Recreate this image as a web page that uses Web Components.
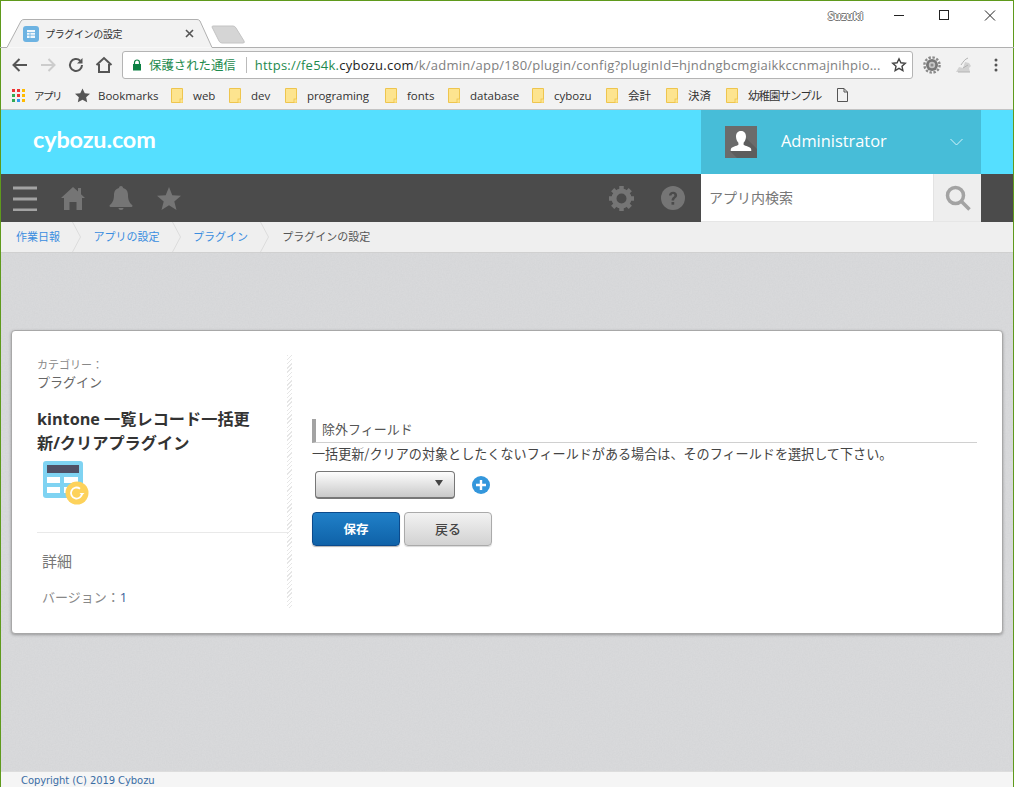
<!DOCTYPE html>
<html lang="ja">
<head>
<meta charset="utf-8">
<title>プラグインの設定</title>
<style>
  html, body { margin: 0; height: 100%; overflow: hidden; }
  body { font-family: "Open Sans", "Noto Sans CJK JP", sans-serif; }
  browser-window { height: 787px; }
</style>
</head>
<body>
<browser-window>
  <browser-tabs slot="chrome" title-text="プラグインの設定"></browser-tabs>
  <browser-toolbar slot="chrome"></browser-toolbar>
  <browser-bookmarks slot="chrome"></browser-bookmarks>
  <cy-header user="Administrator"></cy-header>
  <cy-nav placeholder="アプリ内検索"></cy-nav>
  <cy-breadcrumb>
    <a>作業日報</a>
    <a>アプリの設定</a>
    <a>プラグイン</a>
    <span>プラグインの設定</span>
  </cy-breadcrumb>
  <plugin-page>
    <plugin-side category="プラグイン" name="kintone 一覧レコード一括更新/クリアプラグイン" version="1"></plugin-side>
    <plugin-config
      label="除外フィールド"
      help="一括更新/クリアの対象としたくないフィールドがある場合は、そのフィールドを選択して下さい。"></plugin-config>
  </plugin-page>
  <cy-footer>Copyright (C) 2019 Cybozu</cy-footer>
</browser-window>

<script>
// helper: every element just stamps its html in an open shadow root
class Base extends HTMLElement {
  constructor() {
    super();
    this.attachShadow({ mode: 'open' });
  }
  connectedCallback() {
    this.shadowRoot.innerHTML = this.render();
  }
}

class BrowserWindow extends Base {
  render() {
    return `<style>
      :host { display: flex; flex-direction: column; box-sizing: border-box; width: 1014px;
        border: 1px solid #5f9a1c; border-bottom: 0; background: #fff; }
      .chrome { display: flex; flex-direction: column; }
      </style>
      <div class="chrome"><slot name="chrome"></slot></div>
      <slot></slot>`;
  }
}

class BrowserTabs extends Base {
  render() {
    return `<style>
      :host { display: block; position: relative; height: 47px; background: #fff; font-family: "Noto Sans CJK JP", sans-serif; }
      svg.strip { position: absolute; left: -1px; top: -1px; }
      .title { position: absolute; left: 44px; top: 25px; font-size: 10px; line-height: 16px; letter-spacing: -.35px; color: #333; white-space: nowrap; }
      .user { position: absolute; left: 827px; top: 8px; font: 700 11px/14px "Open Sans", sans-serif; color: #fff;
        text-shadow: -1px 0 #777, 1px 0 #777, 0 -1px #777, 0 1px #777; letter-spacing: -.2px; }
      </style>
      <svg class="strip" width="1014" height="48" viewBox="0 0 1014 48">
        <path d="M0 47.5H7L21 21q1-1.500 3-1.500H197q2 0 3 1.500L212 47.500H1014" fill="#f2f2f2" stroke="#b0b0b0"/>
        <path d="M212 27q0-1 1-1h20q2 0 3 2l8 13q1 2-1 2H222q-2 0-3-2z" fill="#d5d5d5" stroke="#c4c4c4"/>
        <rect x="23" y="26" width="16" height="16" rx="3" fill="#6db3e2"/>
        <path d="M27 30h8v8h-8z" fill="#fff" opacity=".9"/>
        <path d="M27 32.500h8M27 35.200h8M30 33v5" stroke="#6db3e2" stroke-width=".8"/>
        <path d="M186 30l7 7M193 30l-7 7" stroke="#555" stroke-width="1.600"/>
        <path d="M894 15.500h10" stroke="#222"/>
        <rect x="939.500" y="10.500" width="9" height="9" fill="none" stroke="#222"/>
        <path d="M985 10.500l10 10M995 10.500l-10 10" stroke="#222"/>
      </svg>
      <span class="title">${this.getAttribute('title-text')}</span>
      <span class="user">Suzuki</span>`;
  }
}

class BrowserToolbar extends Base {
  render() {
    return `<style>
      :host { display: flex; align-items: center; height: 35px; box-sizing: border-box; background: #f2f2f2; padding: 0 0 1px 9px; }
      svg { flex: none; display: block; }
      .nav { display: flex; gap: 8px; width: 112px; flex: none; }
      .omni { flex: none; width: 791px; height: 28px; box-sizing: border-box; background: #fff; border: 1px solid #b4b4b4; border-radius: 3px;
        display: flex; align-items: center; font-size: 13px; white-space: nowrap; padding-left: 9px; position: relative; }
      .secure { color: #1d8a4d; font-family: "Noto Sans CJK JP", sans-serif; font-size: 12.400px; margin-left: 7px; }
      .sep { width: 1px; height: 16px; background: #bbb; margin: 0 8px 0 10px; }
      .url { color: #808080; font-family: "Open Sans", sans-serif; letter-spacing: .24px; }
      .url b { font-weight: 400; color: #1d8a4d; }
      .url i { font-style: normal; color: #222; }
      .star { position: absolute; right: 5px; top: 5px; }
      .ext { display: flex; align-items: center; gap: 14px; margin-left: 10px; }
      </style>
      <div class="nav">
        <svg width="20" height="20" viewBox="0 0 20 20"><path d="M17 10H4M9.500 4L3.500 10l6 6" fill="none" stroke="#555" stroke-width="2"/></svg>
        <svg width="20" height="20" viewBox="0 0 20 20"><path d="M3 10h13M10.500 4l6 6-6 6" fill="none" stroke="#ccc" stroke-width="2"/></svg>
        <svg width="20" height="20" viewBox="0 0 20 20"><path d="M16 10a6 6 0 1 1-1.800-4.300" fill="none" stroke="#555" stroke-width="2"/><path d="M16.500 3v5.500H11z" fill="#555"/></svg>
        <svg width="20" height="20" viewBox="0 0 20 20"><path d="M2.500 10L10 3l7.500 7M5 9v8h10V9" fill="none" stroke="#555" stroke-width="2"/></svg>
      </div>
      <div class="omni">
        <svg width="10" height="12" viewBox="0 0 10 12"><path d="M2.500 5V3.500a2.500 2.500 0 0 1 5 0V5" fill="none" stroke="#0b8043" stroke-width="1.200"/><rect x="1" y="5" width="8" height="6.500" fill="#0b8043"/></svg>
        <span class="secure">保護された通信</span><span class="sep"></span>
        <span class="url"><b>https://</b><b>fe54k.</b><i>cybozu.com</i>/k/admin/app/180/plugin/config?pluginId=hjndngbcmgiaikkccnmajnihpio...</span>
        <svg class="star" width="16" height="16" viewBox="0 0 16 16"><path d="M8 1.800l1.900 4 4.400.5-3.300 3 .9 4.300L8 11.400l-3.900 2.200.9-4.300-3.300-3 4.400-.5z" fill="none" stroke="#444" stroke-width="1.400"/></svg>
      </div>
      <div class="ext">
        <svg width="18" height="18" viewBox="0 0 18 18"><circle cx="9" cy="9" r="7.600" fill="none" stroke="#8a8a8a" stroke-width="2.400" stroke-dasharray="2.400 1.600"/><circle cx="9" cy="9" r="6" fill="#777"/><circle cx="9" cy="9" r="3.200" fill="#c4c4c4"/><circle cx="9" cy="9" r="1.500" fill="#8a8a8a"/></svg>
        <svg width="18" height="18" viewBox="0 0 18 18"><path d="M1 16l3-5 4 1 2-6 4 1 2 3-2 2 1 4H5z" fill="#d2d2d2"/><path d="M6 9c2-3 4-6 7-7M3 16h12M8 12l5-3" fill="none" stroke="#b4b4b4"/></svg>
        <svg width="4" height="14" viewBox="0 0 4 14" style="margin-left:7px"><circle cx="2" cy="2" r="1.500" fill="#555"/><circle cx="2" cy="7" r="1.500" fill="#555"/><circle cx="2" cy="12" r="1.500" fill="#555"/></svg>
      </div>`;
  }
}

class BrowserBookmarks extends Base {
  render() {
    const folder = `<svg width="12" height="15" viewBox="0 0 12 15"><path d="M.5.500h11v14H.500z" fill="#fde48f" stroke="#eec54e"/><rect x="9" y="11" width="3" height="4" fill="#fde48f" stroke="#eec54e" stroke-width=".8"/></svg>`;
    // name, slot width, letter spacing
    const items = [
      ['web', 58, 0], ['dev', 56, 0], ['programing', 100, -.1], ['fonts', 63, 0],
      ['database', 84, 0], ['cybozu', 74, 0], ['会計', 60, 0], ['決済', 60, 0], ['幼稚園サンプル', 111, -1]
    ];
    const list = items.map(i =>
      `<span class="bm" style="width:${i[1]}px">${folder}<span class="t" style="letter-spacing:${i[2]}px">${i[0]}</span></span>`
    ).join('');
    return `<style>
      :host { display: flex; align-items: center; height: 27px; box-sizing: border-box; background: #f2f2f2; border-bottom: 1px solid #c4c4c4;
        padding: 0 0 2px 11px; font: 11.500px "Open Sans", "Noto Sans CJK JP", sans-serif; color: #333; white-space: nowrap; }
      svg { display: block; flex: none; }
      .apps { display: grid; grid-template-columns: repeat(3, 3px); gap: 2px; margin-right: 9px; }
      .apps i { width: 3px; height: 3px; }
      .first { width: 41px; flex: none; font-size: 10.500px; letter-spacing: -1.500px; }
      .mark { display: flex; gap: 8px; align-items: center; width: 96px; flex: none; }
      .bm { display: flex; align-items: center; gap: 10px; flex: none; }
      </style>
      <span class="apps">
        <i style="background:#e33"></i><i style="background:#e33"></i><i style="background:#fb0"></i>
        <i style="background:#3a5"></i><i style="background:#e33"></i><i style="background:#fb0"></i>
        <i style="background:#3a5"></i><i style="background:#39e"></i><i style="background:#fb0"></i>
      </span>
      <span class="first">アプリ</span>
      <span class="mark"><svg width="15" height="15" viewBox="0 0 16 15"><path d="M8 0l2.400 5 5.600.6-4.100 3.700 1.100 5.500L8 12l-5 2.800 1.100-5.500L0 5.600 5.600 5z" fill="#555"/></svg><span>Bookmarks</span></span>
      ${list}
      <svg width="11" height="14" viewBox="0 0 11 14"><path d="M.5.500h6.500l3.500 3.500v9.500H.500zM7 .500V4h3.500" fill="none" stroke="#555"/></svg>`;
  }
}

class CyHeader extends Base {
  render() {
    return `<style>
      :host { display: flex; height: 64px; background: #55dfff; align-items: center; }
      .logo { margin-left: 32px; font: 700 23.400px/1 "Lato", sans-serif; color: #fff; flex: 1; margin-top: -4px; letter-spacing: -.1px; }
      .user { width: 280px; height: 64px; margin-right: 32px; background: #47bdd8; display: flex; align-items: center; box-sizing: border-box; padding-left: 24px; }
      .user svg.ava { display: block; flex: none; }
      .name { color: #fff; font: 400 16.400px "Open Sans", sans-serif; margin: -4px 0 0 24px; flex: 1; }
      .caret { margin-right: 18px; }
      </style>
      <span class="logo">cybozu.com</span>
      <div class="user">
        <svg class="ava" width="32" height="32" viewBox="0 0 32 32">
          <rect width="32" height="32" fill="#6b6b6b"/>
          <path d="M21 12l11 11v9H12l-7-7z" fill="#5d5d5d"/>
          <path d="M16 5c3.500 0 5 2.700 5 5.500 0 2.500-1 5-2.400 6.200v1.800c0 1 5.400 2 7 3.500.7.700.7 2.500.7 3H5.700c0-.5 0-2.300.7-3 1.600-1.500 7-2.500 7-3.500v-1.800C12 15.500 11 13 11 10.500 11 7.700 12.500 5 16 5z" fill="#fff"/>
        </svg>
        <span class="name">${this.getAttribute('user')}</span>
        <svg class="caret" width="13" height="8" viewBox="0 0 13 8"><path d="M.5 1l6 6 6-6" fill="none" stroke="#d5f3fa"/></svg>
      </div>`;
  }
}

class CyNav extends Base {
  render() {
    return `<style>
      :host { display: flex; height: 48px; background: #4b4b4b; align-items: center; }
      svg { display: block; flex: none; }
      .left { display: flex; align-items: center; flex: 1; padding-left: 12px; gap: 24px; }
      .right { display: flex; align-items: center; gap: 27px; margin-right: 16px; }
      .search { width: 280px; height: 48px; margin-right: 32px; display: flex; background: #fff; box-sizing: border-box; border-bottom: 1px solid #e6e6e6; }
      .box { flex: 1; font: 14px/47px "Noto Sans CJK JP", sans-serif; color: #777; padding-left: 8px; }
      .btn { width: 47px; background: #eee; border-left: 1px solid #e3e3e3; display: flex; align-items: center; justify-content: center; }
      </style>
      <div class="left">
        <svg width="24" height="25" viewBox="0 0 24 25"><path d="M0 2h24M0 13h24M0 24h24" stroke="#a3a3a3" stroke-width="3"/></svg>
        <svg width="24" height="24" viewBox="0 0 24 24"><path d="M12 1l5 4.500V2h3v6.300l4 3.700h-3v12h-5.500v-8h-7v8H3V12H0z" fill="#757575"/></svg>
        <svg width="24" height="24" viewBox="0 0 24 24"><path d="M12 0c1.200 0 2 .8 2 1.900 3.600.9 5 3.700 5 7.100 0 4.500 1 7.500 4.500 10.500 0 1-.5 1.500-1.500 1.500H2c-1 0-1.500-.5-1.500-1.500C4 16.500 5 13.500 5 9c0-3.400 1.400-6.200 5-7.100C10 .8 10.800 0 12 0z" fill="#757575"/><path d="M9.500 22h5c0 1-1 2-2.500 2s-2.500-1-2.500-2z" fill="#757575"/></svg>
        <svg width="24" height="23" viewBox="0 0 24 23"><path d="M12 0l3.300 8.200 8.700.6-6.700 5.600 2.200 8.600L12 18.300 4.500 23l2.200-8.600L0 8.800l8.700-.6z" fill="#757575"/></svg>
      </div>
      <div class="right">
        <svg width="25" height="25" viewBox="0 0 25 25"><circle cx="12.500" cy="12.500" r="7.500" fill="none" stroke="#757575" stroke-width="5"/><path d="M12.500 0v25M0 12.500h25M3.700 3.700l17.600 17.600M21.300 3.700L3.700 21.300" stroke="#757575" stroke-width="4.500" stroke-dasharray="4 17 4"/></svg>
        <svg width="24" height="24" viewBox="0 0 24 24"><circle cx="12" cy="12" r="12" fill="#757575"/><path d="M8 9.500c0-2.300 1.800-3.700 4.100-3.700 2.400 0 4 1.400 4 3.400 0 3-3 2.900-3 5.300h-2.500c0-3.400 2.800-3.300 2.800-5.200 0-.8-.6-1.300-1.400-1.300-.9 0-1.500.6-1.500 1.500z" fill="#4b4b4b"/><rect x="10.500" y="16" width="2.700" height="2.700" fill="#4b4b4b"/></svg>
      </div>
      <div class="search">
        <div class="box">${this.getAttribute('placeholder')}</div>
        <div class="btn"><svg width="26" height="26" viewBox="0 0 26 26"><circle cx="10.500" cy="10.500" r="8" fill="none" stroke="#a3a3a3" stroke-width="3.500"/><path d="M16.500 16.500l8 8" stroke="#a3a3a3" stroke-width="3.500"/></svg></div>
      </div>`;
  }
}

class CyBreadcrumb extends Base {
  connectedCallback() {
    super.connectedCallback();
    // chevron between every crumb, user just passes the links
    const parts = this.shadowRoot.querySelector('.crumbs');
    Array.from(this.children).forEach((el, i, all) => {
      const s = document.createElement('span');
      s.className = el.tagName === 'A' ? 'link' : 'cur';
      s.textContent = el.textContent;
      parts.appendChild(s);
      if (i < all.length - 1) {
        const c = document.createElementNS('http://www.w3.org/2000/svg', 'svg');
        c.setAttribute('width', '9'); c.setAttribute('height', '30'); c.setAttribute('viewBox', '0 0 9 30');
        c.innerHTML = '<path d="M.5 0l8 15-8 15" fill="none" stroke="#dcdcdc"/>';
        parts.appendChild(c);
      }
    });
  }
  render() {
    return `<style>
      :host { display: block; height: 31px; box-sizing: border-box; background: #efefef; border-bottom: 1px solid #d0d0d0; }
      .crumbs { display: flex; height: 30px; align-items: center; padding: 0 0 2px 15px; box-sizing: border-box; font: 11px "Noto Sans CJK JP", sans-serif; white-space: nowrap; }
      svg { display: block; margin: 2px 12.500px 0 12px; flex: none; }
      .link { color: #3a8ddf; }
      .cur { color: #555; padding-left: .7px; }
      </style><div class="crumbs"></div>`;
  }
}

class PluginPage extends Base {
  render() {
    return `<style>
      :host { display: block; position: relative; flex: 1; min-height: 0; overflow: hidden; background-color: #d5d6d8; padding: 77px 10px 0; }
      svg.grain { position: absolute; left: 0; top: 0; width: 100%; height: 100%; }
      .card { display: flex; position: relative; box-sizing: border-box; height: 304px; background: #fff; border: 1px solid #a8a8a8; border-radius: 4px;
        box-shadow: 0 1px 3px rgba(0,0,0,.3); padding: 24px 25px 25px 25px; }
      </style>
      <svg class="grain" aria-hidden="true">
        <filter id="n"><feTurbulence type="fractalNoise" baseFrequency=".7" numOctaves="2" seed="4"/>
          <feColorMatrix values="0 0 0 0 .76  0 0 0 0 .76  0 0 0 0 .77  .6 0 0 0 -.15"/></filter>
        <rect width="100%" height="100%" filter="url(#n)"/>
      </svg>
      <div class="card"><slot></slot></div>`;
  }
}

class PluginSide extends Base {
  render() {
    return `<style>
      :host { display: block; width: 255px; flex: none; box-sizing: border-box; color: #333; font-family: "Open Sans", "Noto Sans CJK JP", sans-serif;
        padding-right: 4px; background: repeating-linear-gradient(135deg, #e6e6e6 0 1px, #fff 1px 3px) right top / 5px 100% no-repeat; }
      .cat { font-size: 11px; line-height: 16px; color: #888; padding-top: 2px; }
      .catname { font-size: 13px; line-height: 19px; color: #666; }
      h1 { font: 700 16.200px/24px "Open Sans", "Noto Sans CJK JP", sans-serif; margin: 15px 30px 0 0; color: #333; }
      svg { display: block; margin: 6px 0 0 6px; }
      hr { border: 0; border-top: 1px solid #e9e9e9; margin: 26px 0 0; }
      .detail { font-size: 15px; line-height: 20px; color: #777; margin: 18px 0 0 5px; }
      .ver { font-size: 13px; line-height: 18px; color: #888; margin: 17px 0 0 5px; }
      .ver b { font-weight: 400; color: #3a5f9a; }
      </style>
      <div class="cat">カテゴリー：</div>
      <div class="catname">${this.getAttribute('category')}</div>
      <h1>${this.getAttribute('name')}</h1>
      <svg width="46" height="45" viewBox="0 0 46 45">
        <rect x="0" y="0" width="40" height="37" rx="3" fill="#7fd3f2"/>
        <rect x="4" y="4" width="32" height="8" fill="#4f5066"/>
        <path d="M4 16h13v6H4zM21 16h14v6H21zM4 26h13v6H4zM21 26h14v6H21z" fill="#fff"/>
        <circle cx="34" cy="32" r="11.500" fill="#fdd25b"/>
        <path d="M39 32a5.500 5.500 0 1 1-2-4.200" fill="none" stroke="#fff" stroke-width="1.800"/>
        <path d="M36.500 32h5l-2.500 2.500z" fill="#fff"/>
      </svg>
      <hr>
      <div class="detail">詳細</div>
      <div class="ver">バージョン：<b>${this.getAttribute('version')}</b></div>`;
  }
}

class PluginConfig extends Base {
  render() {
    return `<style>
      :host { display: block; flex: 1; padding: 64px 0 0 20px; color: #333; font-family: "Noto Sans CJK JP", sans-serif; }
      .label { border-left: 4px solid #a3a3a3; border-bottom: 1px solid #d0d0d0; font-size: 13px; line-height: 20px; height: 24px; box-sizing: border-box; padding-left: 6px; color: #555; margin-bottom: 2px; }
      .help { font-size: 13.100px; line-height: 18px; color: #444; white-space: nowrap; }
      .row { display: flex; align-items: center; margin: 8px 0 0 3px; }
      .select { width: 140px; height: 28px; box-sizing: border-box; border: 1px solid #777; border-bottom-width: 2px; border-radius: 4px;
        background: linear-gradient(#fdfdfd, #c9c9c9); position: relative; }
      .select::after { content: ""; position: absolute; right: 11px; top: 8px; border: 4px solid transparent; border-top: 6px solid #444; border-bottom: 0; }
      .plus { margin-left: 17px; display: block; }
      .btns { display: flex; gap: 4px; margin-top: 13px; }
      .btn { width: 88px; height: 34px; box-sizing: border-box; border-radius: 4px; font: 700 12.500px/32px "Noto Sans CJK JP", sans-serif; text-align: center; }
      .save { color: #fff; background: linear-gradient(#2080c8, #0f62a8); border: 1px solid #0b4a8c; box-shadow: 0 1px 1px rgba(0,0,0,.3); }
      .back { color: #444; background: linear-gradient(#f2f2f2, #d2d2d2); border: 1px solid #aaa; font-weight: 500; font-size: 13px; box-shadow: 0 1px 1px rgba(0,0,0,.15); }
      </style>
      <div class="label">${this.getAttribute('label')}</div>
      <div class="help">${this.getAttribute('help')}</div>
      <div class="row">
        <div class="select"></div>
        <svg class="plus" width="18" height="18" viewBox="0 0 18 18"><circle cx="9" cy="9" r="9" fill="#3497dc"/><path d="M9 4v10M4 9h10" stroke="#fff" stroke-width="2.400"/></svg>
      </div>
      <div class="btns"><div class="btn save">保存</div><div class="btn back">戻る</div></div>`;
  }
}

class CyFooter extends Base {
  render() {
    return `<style>
      :host { display: block; height: 16px; box-sizing: border-box; background: #f5f5f5; border-top: 1px solid #ddd; padding-left: 20px;
        font: 10px/18px "DejaVu Sans", sans-serif; letter-spacing: -.08px; color: #3a6ea5; overflow: hidden; }
      </style><slot></slot>`;
  }
}

customElements.define('browser-window', BrowserWindow);
customElements.define('browser-tabs', BrowserTabs);
customElements.define('browser-toolbar', BrowserToolbar);
customElements.define('browser-bookmarks', BrowserBookmarks);
customElements.define('cy-header', CyHeader);
customElements.define('cy-nav', CyNav);
customElements.define('cy-breadcrumb', CyBreadcrumb);
customElements.define('plugin-page', PluginPage);
customElements.define('plugin-side', PluginSide);
customElements.define('plugin-config', PluginConfig);
customElements.define('cy-footer', CyFooter);
</script>
</body>
</html>
